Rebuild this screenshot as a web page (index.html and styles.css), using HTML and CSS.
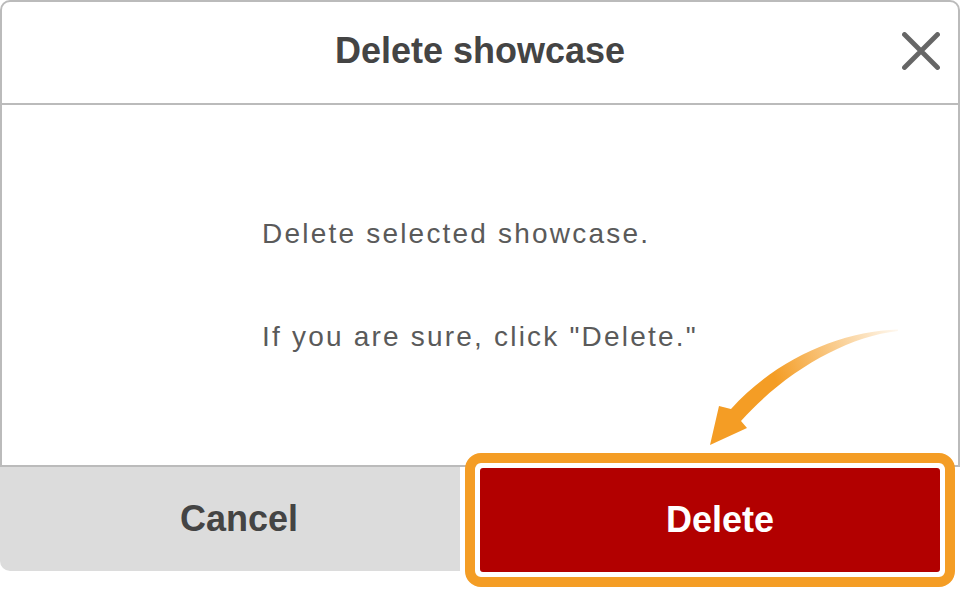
FILE: index.html
```html
<!DOCTYPE html>
<html lang="en">
<head>
<meta charset="utf-8">
<title>Delete showcase</title>
<link rel="stylesheet" href="styles.css">
</head>
<body>
<div class="dialog">
  <div class="panel">
    <header class="dlg-head">
      <h1 class="dlg-title">Delete showcase</h1>
      <button class="close" aria-label="Close">
        <svg width="38" height="38" viewBox="0 0 38 38"><path d="M2.5 2.5 L35.5 35.5 M35.5 2.5 L2.5 35.5" stroke="#666" stroke-width="4.8" stroke-linecap="round" fill="none"/></svg>
      </button>
    </header>
    <div class="dlg-body">
      <div class="msg">
        <p>Delete selected showcase.</p>
        <p class="second">If you are sure, click "Delete."</p>
      </div>
    </div>
  </div>
  <div class="dlg-foot">
    <button class="btn cancel">Cancel</button>
    <div class="delete-cell"><button class="btn delete">Delete</button></div>
  </div>
  <div class="highlight"></div>
  <svg class="arrow" width="960" height="592" viewBox="0 0 960 592">
    <defs>
      <linearGradient id="ag" gradientUnits="userSpaceOnUse" x1="900" y1="328" x2="775" y2="378">
        <stop offset="0" stop-color="#f49d25" stop-opacity="0.05"/>
        <stop offset="1" stop-color="#f49d25" stop-opacity="1"/>
      </linearGradient>
    </defs>
    <path d="M898 329.5 C840 331 775 360 731 409 L719 406 L710 445 L747 428 L741 421 C785 372 845 337 898 331 Z" fill="url(#ag)"/>
  </svg>
</div>
</body>
</html>
```
FILE: styles.css
```css
html, body {
  margin: 0;
  padding: 0;
  background: #fff;
}
body {
  font-family: "Liberation Sans", Arial, sans-serif;
  width: 960px;
  height: 592px;
  overflow: hidden;
}
.dialog {
  position: relative;
  width: 960px;
  height: 592px;
}
.panel {
  border: 2px solid #bbb;
  border-radius: 10px 10px 0 0;
  height: 467px;
  box-sizing: border-box;
  display: flex;
  flex-direction: column;
}
.dlg-head {
  height: 101px;
  border-bottom: 2px solid #bbb;
  display: grid;
  grid-template-columns: 1fr auto 1fr;
  align-items: start;
}
.dlg-title {
  grid-column: 2;
  margin: 0;
  padding-top: 31px;
  font-size: 36px;
  line-height: 36px;
  font-weight: bold;
  color: #444;
}
.close {
  grid-column: 3;
  justify-self: end;
  margin: 30px 18px 0 0;
  padding: 0;
  border: 0;
  background: none;
  width: 38px;
  height: 38px;
  display: block;
}
.close svg { display: block; }
.dlg-body {
  flex: 1;
  display: flex;
  justify-content: center;
  padding-top: 115px;
}
.msg p {
  margin: 0;
  font-size: 28px;
  line-height: 28px;
  letter-spacing: 2.2px;
  color: #5a5a5a;
}
.msg p.second {
  margin-top: 75px;
}
.dlg-foot {
  display: flex;
  height: 104px;
}
.btn {
  border: 0;
  font-family: "Liberation Sans", Arial, sans-serif;
  font-size: 36px;
  font-weight: bold;
  line-height: 36px;
  padding: 0 0 0 18px;
  text-align: center;
}
.cancel {
  width: 460px;
  height: 104px;
  background: #dcdcdc;
  color: #444;
  border-radius: 0 0 0 10px;
}
.delete-cell {
  flex: 1;
  padding: 1px 20px 0 20px;
}
.delete {
  width: 460px;
  height: 104px;
  background: #b20000;
  color: #fff;
  border-radius: 3px;
  padding-left: 20px;
}
.highlight {
  position: absolute;
  left: 465px;
  top: 453px;
  width: 470px;
  height: 114px;
  border: 10px solid #f49d25;
  border-radius: 16px;
  box-shadow: inset 0 0 0 5px #fff;
  pointer-events: none;
}
.arrow {
  position: absolute;
  left: 0;
  top: 0;
  pointer-events: none;
}
```
